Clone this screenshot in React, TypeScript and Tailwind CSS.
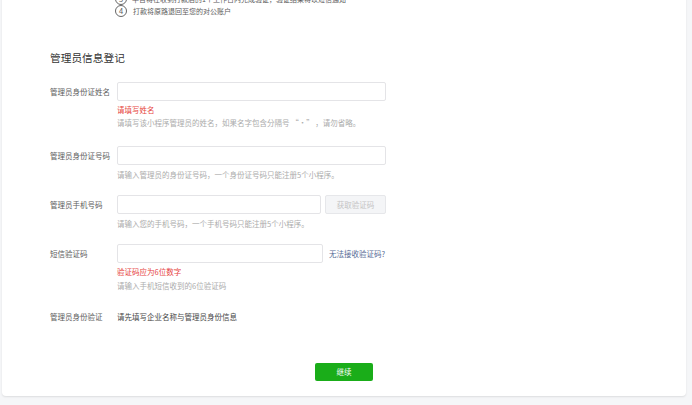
import React from "react";

const font = { fontFamily: '"Noto Sans CJK SC", "Noto Sans", sans-serif' };

function Label({ children }: { children: React.ReactNode }) {
  return (
    <div className="w-[67px] shrink-0 text-[7.5px] leading-[19px] text-[#5c5c5c]">
      {children}
    </div>
  );
}

function Input({ w }: { w: string }) {
  return (
    <div
      className={`${w} h-[19px] rounded-[2px] border border-[#e4e4e7] bg-white`}
    />
  );
}

export default function App() {
  return (
    <div className="min-h-[405px] bg-[#f5f6f8] pl-[2px] pr-[6px] pb-[8px] overflow-hidden" style={font}>
      <div className="bg-white rounded-b-[4px] shadow-[0_1px_2px_rgba(0,0,0,0.1)] pl-[48px] pb-[15px]">
        {/* steps */}
        <div className="mt-[-7px] pl-[65px] flex flex-col text-[7px] leading-[12px] text-[#5c5c5c]">
          <div className="flex items-center gap-[5px]">
            <span className="w-[12px] h-[12px] rounded-full border border-[#666] flex items-center justify-center text-[7.5px] leading-none">3</span>
            <span>平台将在收到打款后的1个工作日内完成验证，验证结果将以短信通知</span>
          </div>
          <div className="flex items-center gap-[6px]">
            <span className="w-[12px] h-[12px] rounded-full border border-[#666] flex items-center justify-center text-[7.5px] leading-none">4</span>
            <span>打款将原路退回至您的对公账户</span>
          </div>
        </div>

        <div className="mt-[34px] text-[10.7px] leading-[14px] text-[#353535]">管理员信息登记</div>

        {/* row 1 */}
        <div className="mt-[17px] flex">
          <Label>管理员身份证姓名</Label>
          <div className="flex flex-col">
            <Input w="w-[269px]" />
            <div className="mt-[2px] text-[7.5px] leading-[13px] text-[#e64340]">请填写姓名</div>
            <div className="text-[7.5px] leading-[13px] text-[#ababab]">请填写该小程序管理员的姓名，如果名字包含分隔号 “·” ，请勿省略。</div>
          </div>
        </div>

        {/* row 2 */}
        <div className="mt-[17px] flex">
          <Label>管理员身份证号码</Label>
          <div className="flex flex-col">
            <Input w="w-[269px]" />
            <div className="mt-[3px] text-[7.5px] leading-[13px] text-[#ababab]">请输入管理员的身份证号码，一个身份证号码只能注册5个小程序。</div>
          </div>
        </div>

        {/* row 3 */}
        <div className="mt-[14px] flex">
          <Label>管理员手机号码</Label>
          <div className="flex flex-col">
            <div className="flex gap-[4px]">
              <Input w="w-[204px]" />
              <div className="w-[61px] h-[19px] rounded-[2px] border border-[#e6e7ea] bg-[#f4f5f7] text-[7.5px] leading-[17px] text-center text-[#c4c4c4]">获取验证码</div>
            </div>
            <div className="mt-[3px] text-[7.5px] leading-[13px] text-[#ababab]">请输入您的手机号码，一个手机号码只能注册5个小程序。</div>
          </div>
        </div>

        {/* row 4 */}
        <div className="mt-[14px] flex">
          <Label>短信验证码</Label>
          <div className="flex flex-col">
            <div className="flex items-center gap-[6px]">
              <Input w="w-[206px]" />
              <span className="text-[7.5px] leading-[19px] text-[#576b95]">无法接收验证码?</span>
            </div>
            <div className="mt-[2px] text-[7.5px] leading-[13px] text-[#e64340]">验证码应为6位数字</div>
            <div className="mt-[1px] text-[7.5px] leading-[13px] text-[#ababab]">请输入手机短信收到的6位验证码</div>
          </div>
        </div>

        {/* row 5 */}
        <div className="mt-[15px] flex">
          <Label>管理员身份验证</Label>
          <div className="text-[7.5px] leading-[19px] text-[#454545]">请先填写企业名称与管理员身份信息</div>
        </div>

        <div className="mt-[30px] pl-[265px]">
          <button className="w-[58px] h-[18px] rounded-[2px] bg-[#1aad19] text-white text-[7.5px] leading-[18px] text-center">继续</button>
        </div>
      </div>
    </div>
  );
}
